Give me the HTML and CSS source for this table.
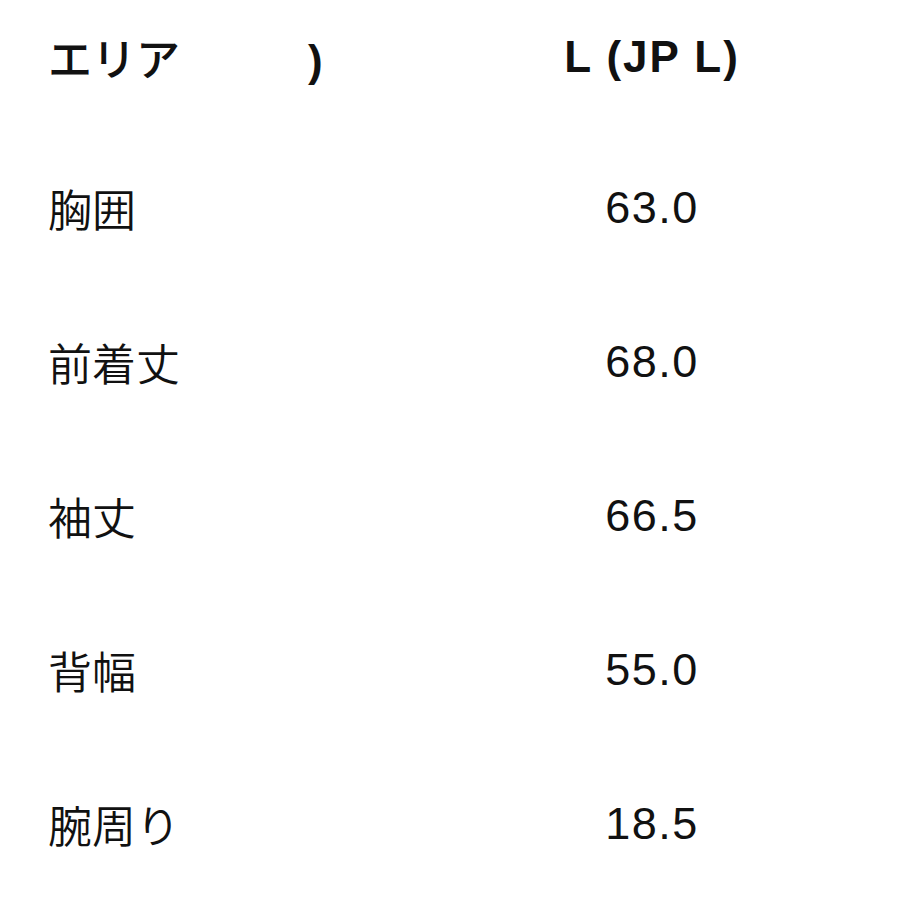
FILE: index.html
```html
<!DOCTYPE html>
<html lang="ja">
<head>
<meta charset="utf-8">
<link rel="stylesheet" href="styles.css">
</head>
<body>
<div class="table">
  <div class="row head">
    <div class="c1">エリア<span class="paren">)</span></div>
    <div class="c2">L (JP L)</div>
  </div>
  <div class="row"><div class="c1">胸囲</div><div class="c2">63.0</div></div>
  <div class="row"><div class="c1">前着丈</div><div class="c2">68.0</div></div>
  <div class="row"><div class="c1">袖丈</div><div class="c2">66.5</div></div>
  <div class="row"><div class="c1">背幅</div><div class="c2">55.0</div></div>
  <div class="row"><div class="c1">腕周り</div><div class="c2">18.5</div></div>
</div>
</body>
</html>
```

FILE: styles.css
```css
html, body {
  margin: 0;
  padding: 0;
  background: #ffffff;
}
body {
  width: 900px;
  height: 900px;
  overflow: hidden;
  font-family: "Liberation Sans", "Noto Sans CJK JP", sans-serif;
  color: #111111;
}
.table {
  display: flex;
  flex-direction: column;
  padding-left: 48px;
  margin-top: -3px;
}
.row {
  display: grid;
  grid-template-columns: 356px 496px;
  align-items: center;
  height: 154px;
  font-size: 44px;
}
.head {
  height: 120px;
  margin-bottom: 14px;
  font-weight: bold;
}
.c1 {
  white-space: nowrap;
  font-family: "Noto Sans CJK JP", sans-serif;
  font-weight: 350;
}
.head .c1 {
  font-weight: 500;
}
.paren {
  font-family: "Liberation Sans", sans-serif;
  font-weight: bold;
  margin-left: 128px;
}
.c2 {
  text-align: center;
  font-size: 45px;
  letter-spacing: 1.5px;
}
.head .c2 {
  font-size: 44px;
  letter-spacing: 2px;
}
```
